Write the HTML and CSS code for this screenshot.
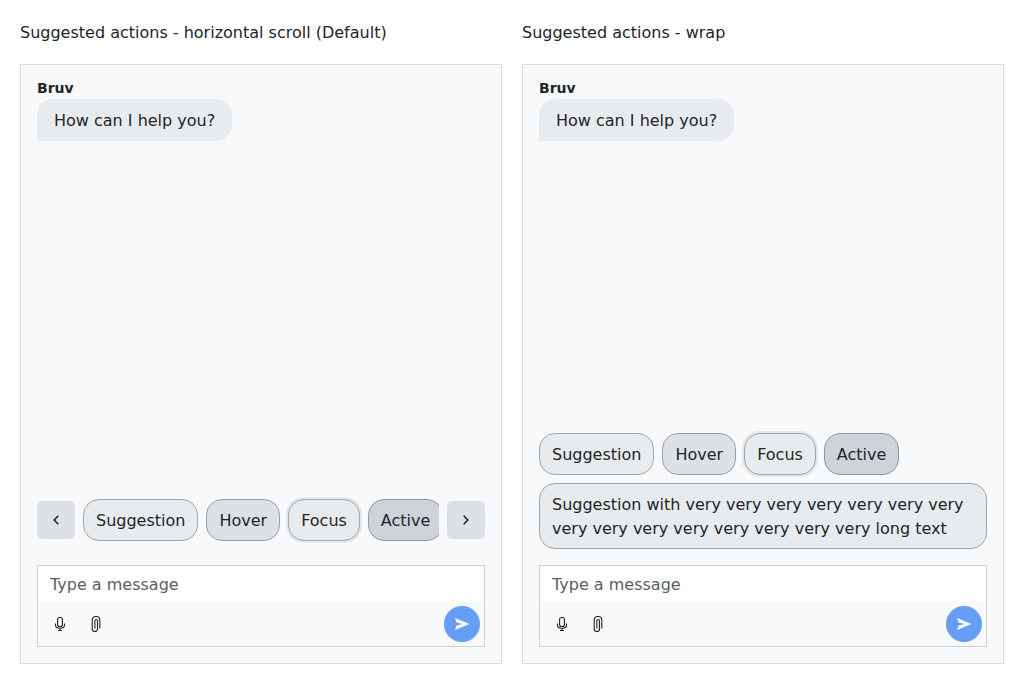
FILE: index.html
```html
<!DOCTYPE html>
<html lang="en">
<head>
<meta charset="utf-8">
<title>Suggested actions</title>
<link rel="stylesheet" href="styles.css">
</head>
<body>
<svg class="sprite" width="0" height="0" aria-hidden="true">
  <symbol id="mic" viewBox="0 0 16 16"><rect x="5.6" y="1.5" width="4.800" height="9" rx="2"/><path d="M3.500 7.500v1.500c0 2.200 1.800 3.300 4.500 3.300s4.500-1.100 4.500-3.300V7.500M8 12.300v2M6 14.500h4"/></symbol>
  <symbol id="clip" viewBox="0 0 16 16"><path d="M11.800 12.500V4c0-2.200-1.500-3.500-3.800-3.500S4.200 1.800 4.200 4v8.700c0 1.700 1 2.800 2.700 2.800s2.600-1.100 2.600-2.800V4.800c0-.9-.5-1.300-1.300-1.300s-1.300.4-1.300 1.300v7.700"/></symbol>
</svg>
<main class="page">
  <section class="example">
    <h2 class="title">Suggested actions - horizontal scroll (Default)</h2>
    <div class="chat">
      <div class="messages">
        <p class="author">Bruv</p>
        <div class="bubble">How can I help you?</div>
      </div>
      <div class="scroller">
        <button class="arrow" aria-label="Previous"><svg width="16" height="16" viewBox="0 0 16 16"><path d="M10.300 3.800 6.200 8l4.100 4.200"/></svg></button>
        <div class="track">
          <span class="chip">Suggestion</span><span class="chip hover">Hover</span><span class="chip focus">Focus</span><span class="chip active">Active</span>
        </div>
        <button class="arrow" aria-label="Next"><svg width="16" height="16" viewBox="0 0 16 16"><path d="M5.700 3.800 9.800 8l-4.100 4.200"/></svg></button>
      </div>
      <div class="composer">
        <input class="field" placeholder="Type a message" aria-label="Message">
        <div class="tools">
          <svg class="tool" width="16" height="16"><use href="#mic"/></svg>
          <svg class="tool" width="16" height="16"><use href="#clip"/></svg>
          <button class="send" aria-label="Send"><svg width="16" height="16" viewBox="0 0 16 16"><path d="M1 1.900 15.300 8 1 14.100l1.600-4.600L9 8 2.600 6.500z"/></svg></button>
        </div>
      </div>
    </div>
  </section>
  <section class="example">
    <h2 class="title">Suggested actions - wrap</h2>
    <div class="chat">
      <div class="messages">
        <p class="author">Bruv</p>
        <div class="bubble">How can I help you?</div>
      </div>
      <div class="wrap">
        <span class="chip">Suggestion</span><span class="chip hover">Hover</span><span class="chip focus">Focus</span><span class="chip active">Active</span>
        <span class="chip long">Suggestion with very very very very very very very very very very very very very very very long text</span>
      </div>
      <div class="composer">
        <input class="field" placeholder="Type a message" aria-label="Message">
        <div class="tools">
          <svg class="tool" width="16" height="16"><use href="#mic"/></svg>
          <svg class="tool" width="16" height="16"><use href="#clip"/></svg>
          <button class="send" aria-label="Send"><svg width="16" height="16" viewBox="0 0 16 16"><path d="M1 1.900 15.300 8 1 14.100l1.600-4.600L9 8 2.600 6.500z"/></svg></button>
        </div>
      </div>
    </div>
  </section>
</main>
</body>
</html>
```
FILE: styles.css
```css
* { box-sizing: border-box; }
body {
  margin: 0;
  background: #fff;
  color: #212529;
  font: 16px/24px "DejaVu Sans", sans-serif;
}
.sprite { display: block; height: 0; }
.page {
  display: grid;
  grid-template-columns: 1fr 1fr;
  gap: 20px;
  padding: 20px;
}
.example { min-width: 0; }
.title { margin: 0 0 19px; padding-top: 1px; font-size: 16px; font-weight: 400; }
.chat {
  display: flex;
  flex-direction: column;
  gap: 16px;
  height: 600px;
  padding: 16px;
  border: 1px solid #dadce0;
  background: #f8f9fb;
}
.messages { flex: 1; }
.author { margin: 0 0 4px; font-size: 14px; line-height: 14px; font-weight: 700; }
.bubble {
  width: fit-content;
  padding: 10px 17px 8px;
  border-radius: 16px 16px 16px 2px;
  background: #e8ebee;
}
.scroller { display: flex; align-items: center; gap: 8px; margin-bottom: 8px; }
.arrow {
  display: flex;
  flex: none;
  align-items: center;
  justify-content: center;
  width: 38px;
  height: 38px;
  padding: 0;
  border: 0;
  border-radius: 5px;
  background: #dde0e5;
}
.arrow path { fill: none; stroke: #212529; stroke-width: 1.6; }
.track {
  display: flex;
  flex: 1;
  gap: 8px;
  min-width: 0;
  overflow-x: clip;
  overflow-y: visible;
}
.chip {
  flex: none;
  padding: 9px 12px 7px;
  border: 1px solid #a3a6a9;
  border-radius: 16px;
  background: #e8ebee;
  white-space: nowrap;
}
.chip.hover { background: #dde0e5; border-color: #9a9fa5; }
.chip.focus { box-shadow: 0 0 0 2px #e5e7e9; }
.chip.active { background: #ced3d9; border-color: #9299a0; }
.wrap { display: flex; flex-wrap: wrap; gap: 8px; }
.chip.long { flex: 0 1 auto; white-space: normal; }
.composer { border: 1px solid #cfd1d4; }
.field {
  display: block;
  width: 100%;
  height: 36px;
  padding: 0 12px;
  border: 0;
  outline: 0;
  background: #fff;
  color: inherit;
  font: inherit;
}
.field::placeholder { color: #596067; opacity: 1; }
.tools {
  display: flex;
  align-items: center;
  gap: 20px;
  height: 44px;
  padding: 4px 4px 4px 14px;
}
.tool { fill: none; stroke: #212529; stroke-width: 1.1; }
.send {
  display: flex;
  align-items: center;
  justify-content: center;
  width: 36px;
  height: 36px;
  margin-left: auto;
  padding: 0;
  border: 0;
  border-radius: 50%;
  background: #669df5;
}
.send path { fill: #fff; }
```
